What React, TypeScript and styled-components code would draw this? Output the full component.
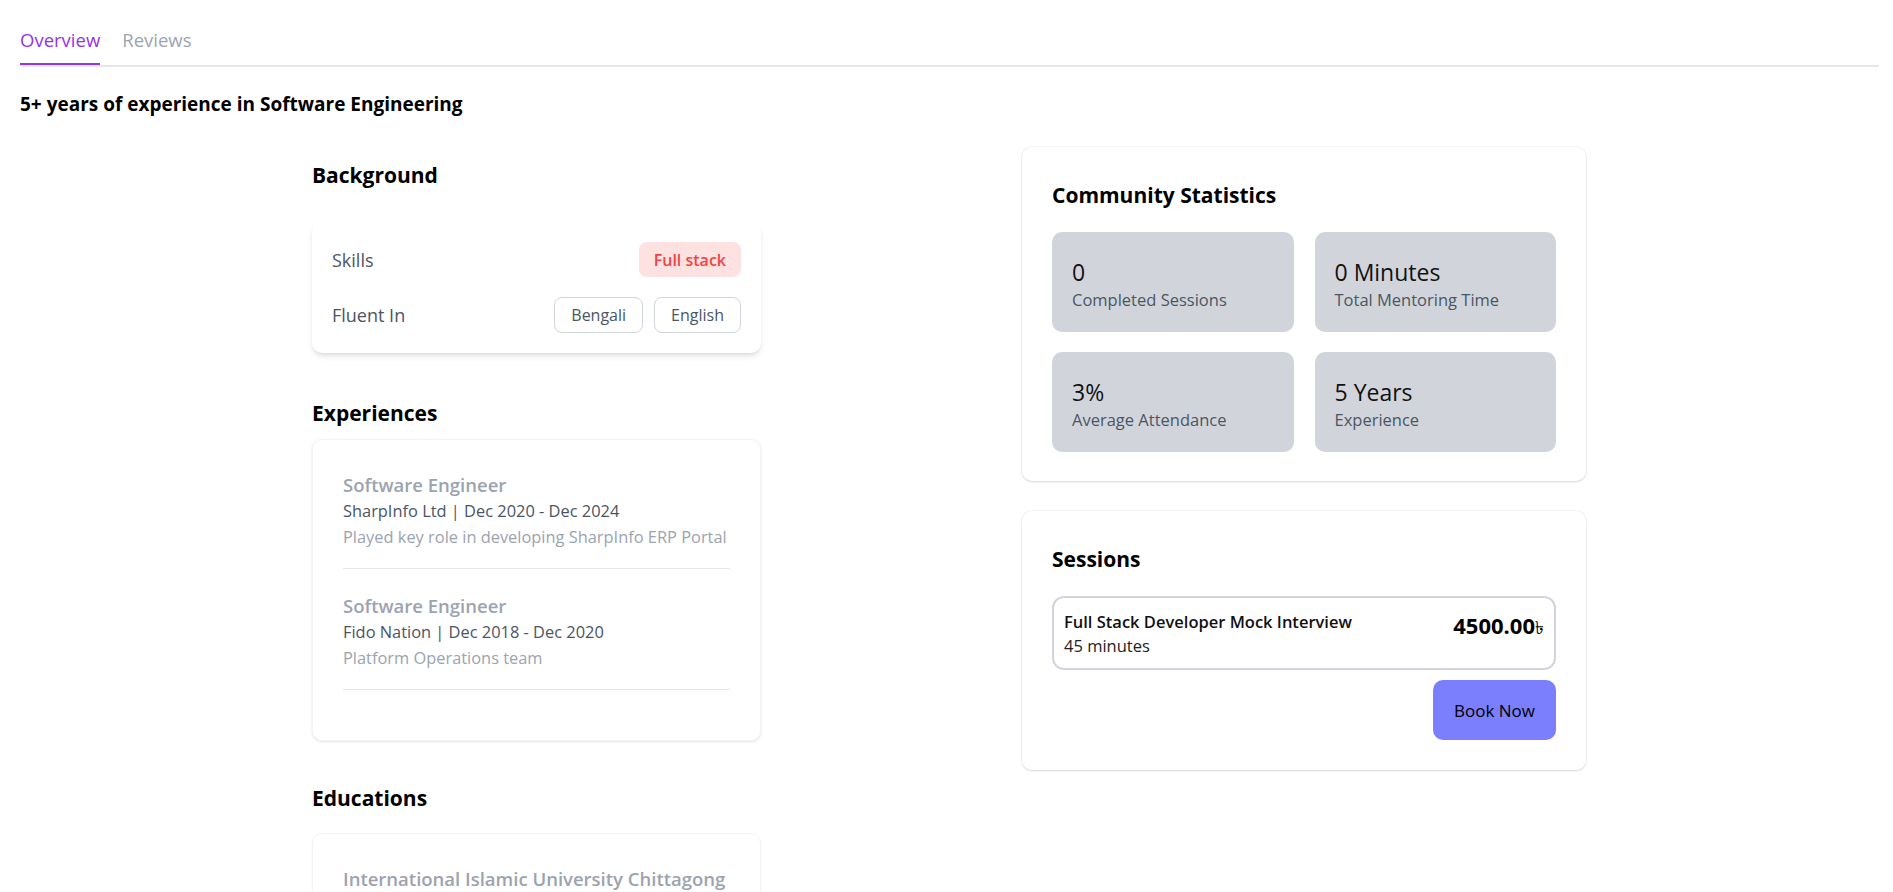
import React from "react";
import styled, { createGlobalStyle, css } from "styled-components";

const GlobalStyle = createGlobalStyle`
  *, *::before, *::after { box-sizing: border-box; }
  html, body { margin: 0; padding: 0; background: #ffffff; }
  body {
    font-family: "Open Sans", "Noto Sans", "DejaVu Sans", sans-serif;
    color: #000000;
    -webkit-font-smoothing: antialiased;
  }
`;

const Page = styled.div`
  padding: 0 14px 40px 20px;
`;

const TabBar = styled.nav`
  display: flex;
  gap: 22px;
  margin-top: 26px;
  border-bottom: 2px solid #e5e7eb;
`;

const Tab = styled.button<{ $active?: boolean }>`
  background: none;
  border: none;
  padding: 0 0 9px;
  font-family: inherit;
  font-size: 18.5px;
  line-height: 28px;
  cursor: pointer;
  color: ${(p) => (p.$active ? "#9333ea" : "#9ca3af")};
  border-bottom: 2px solid ${(p) => (p.$active ? "#9333ea" : "transparent")};
`;

const Headline = styled.h1`
  margin: 23px 0 0;
  font-size: 19px;
  line-height: 28px;
  font-weight: 700;
`;

const Columns = styled.div`
  display: grid;
  grid-template-columns: 449px 564px;
  column-gap: 261px;
  margin: 29px 0 0 292px;
  align-items: start;
`;

const Column = styled.div<{ $gap?: number }>`
  display: flex;
  flex-direction: column;
  gap: ${(p) => p.$gap ?? 0}px;
`;

const SectionTitle = styled.h2<{ $mt: number; $mb: number }>`
  margin: ${(p) => p.$mt}px 0 ${(p) => p.$mb}px;
  font-size: 21px;
  line-height: 30px;
  font-weight: 700;
`;

const InfoCard = styled.div`
  display: flex;
  flex-direction: column;
  gap: 20px;
  padding: 20px;
  background: #fff;
  border-radius: 10px;
  box-shadow: 0 4px 6px -1px rgba(0, 0, 0, 0.1), 0 2px 4px -2px rgba(0, 0, 0, 0.1);
`;

const InfoRow = styled.div`
  display: flex;
  align-items: center;
  justify-content: space-between;
`;

const InfoLabel = styled.span`
  font-size: 18px;
  line-height: 26px;
  color: #4b5563;
`;

const ChipGroup = styled.div`
  display: flex;
  gap: 11px;
`;

const Badge = styled.span`
  display: inline-flex;
  align-items: center;
  height: 35px;
  padding: 0 15px;
  border-radius: 8px;
  background: #fee2e2;
  color: #ef4444;
  font-size: 16px;
  font-weight: 600;
`;

const Chip = styled.span`
  display: inline-flex;
  align-items: center;
  height: 36px;
  padding: 0 16px;
  border: 1px solid #d1d5db;
  border-radius: 8px;
  color: #4b5563;
  font-size: 16px;
`;

const ListCard = styled.div<{ $soft?: boolean }>`
  padding: 32px 30px 26px;
  background: #fff;
  border-radius: 10px;
  border: 1px solid #f3f4f6;
  ${(p) =>
    p.$soft
      ? css`
          box-shadow: 0 1px 2px rgba(0, 0, 0, 0.03);
        `
      : css`
          box-shadow: 0 1px 3px rgba(0, 0, 0, 0.08), 0 1px 2px rgba(0, 0, 0, 0.04);
        `}
`;

const ListItem = styled.div`
  padding-bottom: 18px;
  margin-bottom: 24px;
  border-bottom: 1px solid #e5e7eb;
`;

const ItemTitle = styled.div`
  font-size: 18.5px;
  line-height: 26px;
  font-weight: 600;
  color: #9ca3af;
  white-space: nowrap;
`;

const ItemMeta = styled.div`
  font-size: 16.4px;
  line-height: 26px;
  color: #4b5563;
  white-space: nowrap;
`;

const ItemDesc = styled.div`
  font-size: 16.4px;
  line-height: 26px;
  color: #9ca3af;
  white-space: nowrap;
`;

const Panel = styled.section<{ $pb?: number }>`
  padding: 33px 30px ${(p) => p.$pb ?? 29}px;
  background: #fff;
  border-radius: 10px;
  box-shadow: 0 0 0 1px rgba(0, 0, 0, 0.03), 0 1px 3px rgba(0, 0, 0, 0.09), 0 1px 2px rgba(0, 0, 0, 0.04);
`;

const PanelTitle = styled.h2`
  margin: 0 0 22px;
  font-size: 21px;
  line-height: 30px;
  font-weight: 700;
`;

const StatGrid = styled.div`
  display: grid;
  grid-template-columns: 1fr 1fr;
  column-gap: 21px;
  row-gap: 20px;
`;

const StatBox = styled.div`
  height: 100px;
  padding: 25px 20px 0;
  border-radius: 10px;
  background: #d1d5db;
`;

const StatValue = styled.div`
  font-size: 23px;
  line-height: 30px;
  color: #111111;
`;

const StatLabel = styled.div`
  font-size: 16.5px;
  line-height: 26px;
  color: #4b5563;
`;

const SessionItem = styled.div`
  display: flex;
  align-items: flex-start;
  justify-content: space-between;
  padding: 12px 10px 10px 10px;
  border: 2px solid #d1d5db;
  border-radius: 12px;
`;

const SessionTitle = styled.div`
  font-size: 16.5px;
  line-height: 24px;
  font-weight: 600;
  color: #111111;
`;

const SessionDuration = styled.div`
  font-size: 16.5px;
  line-height: 24px;
  color: #222222;
`;

const Price = styled.div`
  font-size: 22px;
  line-height: 30px;
  font-weight: 700;
  color: #000;
  white-space: nowrap;
`;

const Currency = styled.span`
  font-size: 18px;
  font-weight: 400;
`;

const Actions = styled.div`
  display: flex;
  justify-content: flex-end;
  margin-top: 10px;
`;

const BookButton = styled.button`
  height: 60px;
  padding: 0 21px;
  border: none;
  border-radius: 10px;
  background: #7b7ffe;
  color: #000;
  font-family: inherit;
  font-size: 17px;
  cursor: pointer;
`;

const experiences = [
  {
    title: "Software Engineer",
    meta: "SharpInfo Ltd | Dec 2020 - Dec 2024",
    desc: "Played key role in developing SharpInfo ERP Portal",
  },
  {
    title: "Software Engineer",
    meta: "Fido Nation | Dec 2018 - Dec 2020",
    desc: "Platform Operations team",
  },
];

const stats = [
  { value: "0", label: "Completed Sessions" },
  { value: "0 Minutes", label: "Total Mentoring Time" },
  { value: "3%", label: "Average Attendance" },
  { value: "5 Years", label: "Experience" },
];

export default function App() {
  return (
    <>
      <GlobalStyle />
      <Page>
        <TabBar>
          <Tab $active>Overview</Tab>
          <Tab>Reviews</Tab>
        </TabBar>
        <Headline>5+ years of experience in Software Engineering</Headline>
        <Columns>
          <Column>
            <SectionTitle $mt={13} $mb={32}>Background</SectionTitle>
            <InfoCard>
              <InfoRow>
                <InfoLabel>Skills</InfoLabel>
                <ChipGroup>
                  <Badge>Full stack</Badge>
                </ChipGroup>
              </InfoRow>
              <InfoRow>
                <InfoLabel>Fluent In</InfoLabel>
                <ChipGroup>
                  <Chip>Bengali</Chip>
                  <Chip>English</Chip>
                </ChipGroup>
              </InfoRow>
            </InfoCard>

            <SectionTitle $mt={45} $mb={11}>Experiences</SectionTitle>
            <ListCard>
              {experiences.map((e, i) => (
                <ListItem key={i}>
                  <ItemTitle>{e.title}</ItemTitle>
                  <ItemMeta>{e.meta}</ItemMeta>
                  <ItemDesc>{e.desc}</ItemDesc>
                </ListItem>
              ))}
            </ListCard>

            <SectionTitle $mt={42} $mb={20}>Educations</SectionTitle>
            <ListCard $soft>
              <ListItem>
                <ItemTitle>International Islamic University Chittagong</ItemTitle>
                <ItemMeta>Computer Science &amp; Engineering</ItemMeta>
              </ListItem>
            </ListCard>
          </Column>

          <Column $gap={30}>
            <Panel>
              <PanelTitle>Community Statistics</PanelTitle>
              <StatGrid>
                {stats.map((s) => (
                  <StatBox key={s.label}>
                    <StatValue>{s.value}</StatValue>
                    <StatLabel>{s.label}</StatLabel>
                  </StatBox>
                ))}
              </StatGrid>
            </Panel>
            <Panel $pb={30}>
              <PanelTitle>Sessions</PanelTitle>
              <SessionItem>
                <div>
                  <SessionTitle>Full Stack Developer Mock Interview</SessionTitle>
                  <SessionDuration>45 minutes</SessionDuration>
                </div>
                <Price>
                  4500.00<Currency>৳</Currency>
                </Price>
              </SessionItem>
              <Actions>
                <BookButton>Book Now</BookButton>
              </Actions>
            </Panel>
          </Column>
        </Columns>
      </Page>
    </>
  );
}
